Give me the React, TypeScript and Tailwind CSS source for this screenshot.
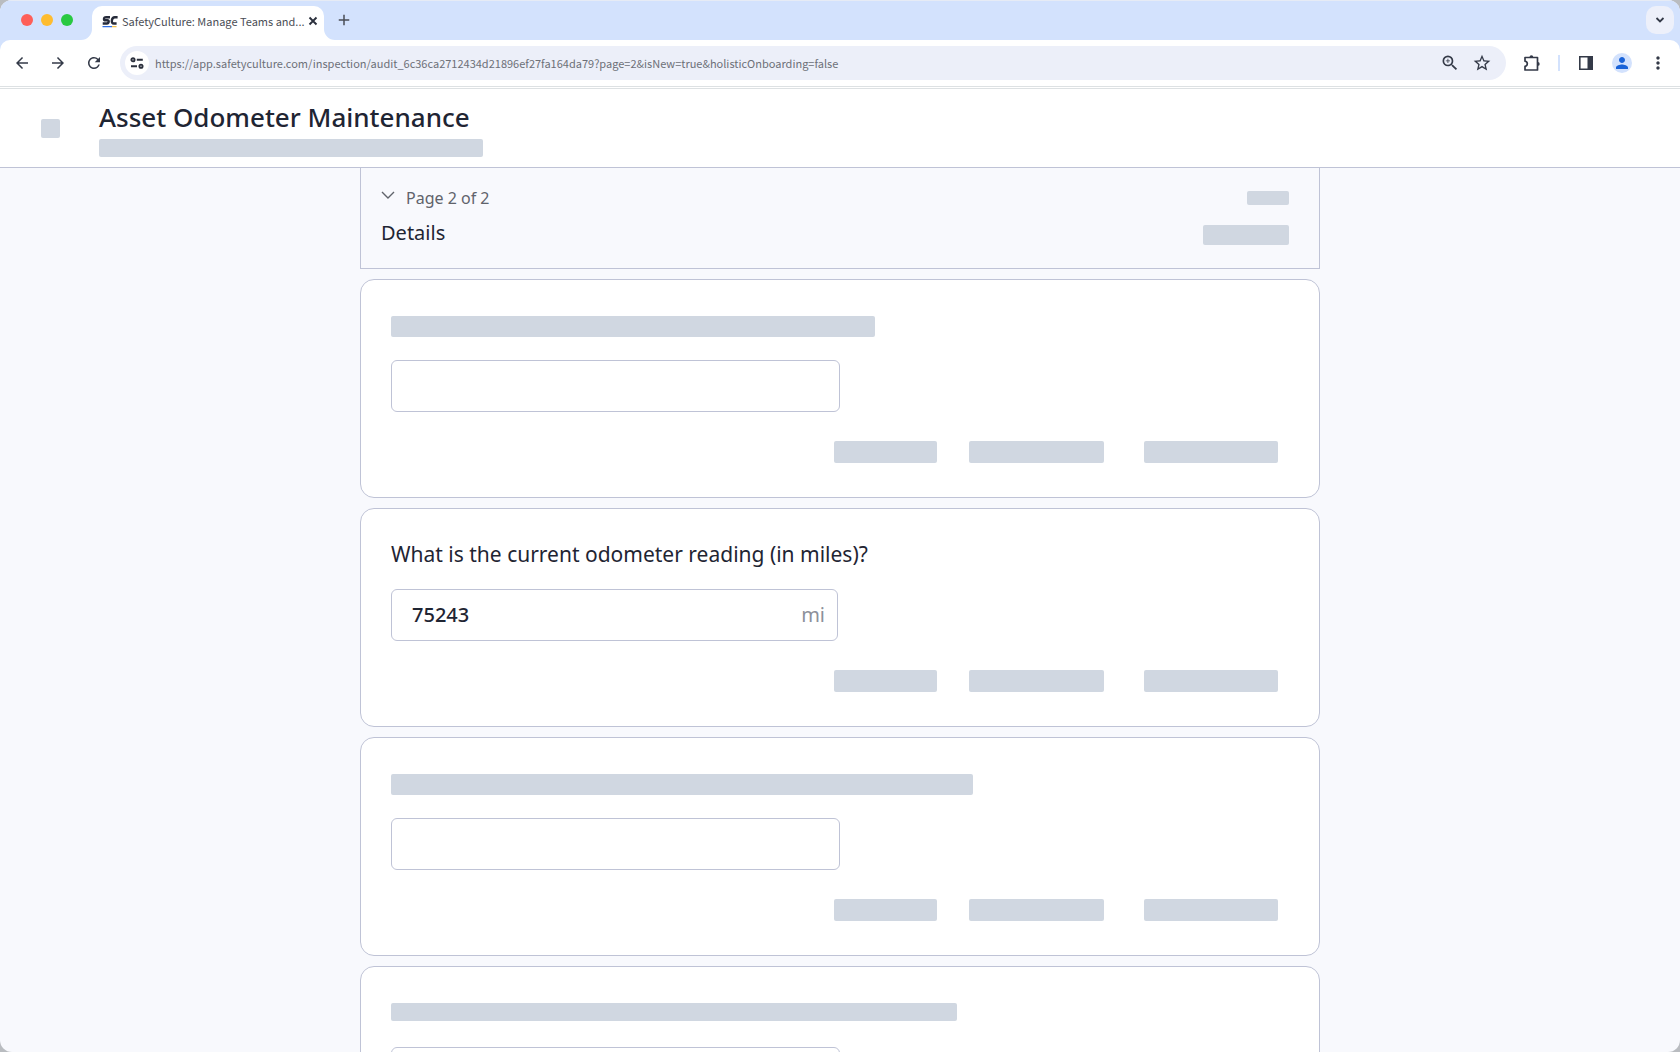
import type { ReactNode } from 'react';
import { MdArrowBack, MdArrowForward, MdMoreVert, MdPerson, MdRefresh, MdStarBorder, MdZoomIn, MdAdd } from 'react-icons/md';
import clsx from 'clsx';

const PAGE_URL =
  'https://app.safetyculture.com/inspection/audit_6c36ca2712434d21896ef27fa164da79?page=2&isNew=true&holisticOnboarding=false';

function Placeholder({ className }: { className: string }) {
  return <div aria-hidden="true" className={clsx('rounded-xs bg-[#d0d7e1]', className)} />;
}

function Logo() {
  return (
    <svg viewBox="0 0 16 13" className="h-[13px] w-4 shrink-0" fill="none">
      <g stroke="#262b3a" strokeWidth="2.4">
        <path d="M8 2.2H4.2C2.6 2.2 2 3 2 3.9s.6 1.4 1.5 1.4h1.8c1 0 1.5.6 1.4 1.4S6 8.5 4.9 8.5H.7" />
        <path d="M15.6 2.2h-2.8C11 2.2 10.2 3.3 9.900 5.2s.2 3.3 2.100 3.3h2.600" />
      </g>
      <path d="M.5 11.7h9.5" stroke="#2f6fe4" strokeWidth="1.2" />
      <path d="M10 11.7h4.5" stroke="#f3c04b" strokeWidth="1.2" />
    </svg>
  );
}

function SiteSettingsIcon() {
  return (
    <svg viewBox="0 0 14 12" className="h-3 w-3.5" fill="none" stroke="#2b303d" strokeWidth="1.9">
      <circle cx="3" cy="2.8" r="1.6" />
      <path d="M6.800 2.800h6M1 9.200h6" />
      <circle cx="11" cy="9.2" r="1.6" />
    </svg>
  );
}

function ExtensionsIcon() {
  return (
    <svg viewBox="0 0 18 18" className="size-[18px]" fill="none" stroke="#343a48" strokeWidth="1.7" strokeLinejoin="round">
      <path d="M2 3.500h12.500v12.500H2v-3.600c1.500-.3 2.300-1.200 2.300-2.600S3.500 7.500 2 7.200z" />
      <path d="M6.500 3.200a1.900 1.900 0 0 1 3.800 0zM14.800 8a1.900 1.900 0 0 1 0 3.800z" fill="#343a48" stroke="none" />
    </svg>
  );
}

function SidePanelIcon() {
  return (
    <svg viewBox="0 0 16 16" className="size-4" fill="none">
      <path d="M1.800 1.800h12.400v12.400H1.800z" stroke="#343a48" strokeWidth="1.6" />
      <path d="M9.500 1.500h5v13h-5z" fill="#343a48" />
    </svg>
  );
}

function IconButton({ label, className, children }: { label: string; className?: string; children: ReactNode }) {
  return (
    <button type="button" aria-label={label} className={clsx('flex shrink-0 items-center justify-center text-[#343a48]', className)}>
      {children}
    </button>
  );
}

function TabStrip() {
  return (
    <div className="flex h-10 items-end border-t border-[#e6ebf5] bg-[#d3e2fd] pr-1.5">
      <div className="flex h-10 items-center gap-2 pl-[21px]">
        <span className="size-3 rounded-full bg-[#fe5f58]" />
        <span className="size-3 rounded-full bg-[#febc2f]" />
        <span className="size-3 rounded-full bg-[#29c941]" />
      </div>
      {/* Active tab with its flared feet */}
      <div className="flex items-end pl-2">
        <svg viewBox="0 0 11 11" className="size-[11px]" fill="#fff">
          <path d="M11 0v11H0A11 11 0 0 0 11 0z" />
        </svg>
        <div className="flex h-[34px] w-[232px] items-center rounded-t-[10px] bg-white pr-2 pb-1 pl-2.5">
          <Logo />
          <span className="ml-1 grow text-[11px] whitespace-nowrap text-[#4a4d55]">SafetyCulture: Manage Teams and...</span>
          <IconButton label="Close tab" className="w-4">
            <svg viewBox="0 0 10 10" className="size-2.5" fill="none" stroke="#2b303d" strokeWidth="1.9">
              <path d="M1.500 1.500l7 7M8.500 1.500l-7 7" />
            </svg>
          </IconButton>
        </div>
        <svg viewBox="0 0 11 11" className="size-[11px]" fill="#fff">
          <path d="M0 0v11h11A11 11 0 0 1 0 0z" />
        </svg>
      </div>
      <IconButton label="New tab" className="h-10 w-[18px]">
        <MdAdd className="size-[18px] text-[#4a4d55]" />
      </IconButton>
      <IconButton label="Search tabs" className="mb-1.5 ml-auto size-7 rounded-[10px] bg-[#edf0fa]">
        <svg viewBox="0 0 10 6" className="h-1.5 w-2.5" fill="none" stroke="currentColor" strokeWidth="1.8">
          <path d="M1.500 1l3.500 3.500L8.500 1" />
        </svg>
      </IconButton>
    </div>
  );
}

function Toolbar() {
  return (
    <div className="bg-[#d3e2fd]">
      <div className="flex h-[46px] items-center rounded-t-[10px] bg-white px-3">
        <div className="flex gap-4">
          <IconButton label="Back" className="size-5">
            <MdArrowBack className="size-[18px]" />
          </IconButton>
          <IconButton label="Forward" className="size-5">
            <MdArrowForward className="size-[18px]" />
          </IconButton>
          <IconButton label="Reload" className="size-5">
            <MdRefresh className="size-[18px]" />
          </IconButton>
        </div>
        <div className="ml-4 flex h-[34px] grow items-center rounded-full bg-[#eceff9] pr-3.5 pl-[5px]">
          <IconButton label="Site information" className="size-6 rounded-full bg-white">
            <SiteSettingsIcon />
          </IconButton>
          <input
            aria-label="Address"
            defaultValue={PAGE_URL}
            className="ml-1.5 min-w-0 grow bg-transparent text-[11px] text-[#6d7078] outline-none"
          />
          <IconButton label="Zoom" className="size-5">
            <MdZoomIn className="size-5" />
          </IconButton>
          <IconButton label="Bookmark" className="ml-3 size-5">
            <MdStarBorder className="size-5" />
          </IconButton>
        </div>
        <IconButton label="Extensions" className="ml-4 size-5">
          <ExtensionsIcon />
        </IconButton>
        <span className="ml-4 h-4 w-0.5 bg-[#d3e2fd]" />
        <IconButton label="Side panel" className="ml-4 size-5">
          <SidePanelIcon />
        </IconButton>
        <IconButton label="Profile" className="ml-4 size-5 rounded-full bg-[#d3e2fd]">
          <MdPerson className="size-[18px] text-[#1a63d8]" />
        </IconButton>
        <IconButton label="Menu" className="ml-4 size-5">
          <MdMoreVert className="size-5" />
        </IconButton>
      </div>
      <div className="h-[3px] border-y border-[#dde1e3] bg-white" />
    </div>
  );
}

type CardProps = {
  id: string;
  question?: string;
  bar?: string;
  value?: string;
  unit?: string;
};

const cards: CardProps[] = [
  { id: 'q1', bar: 'h-[21px] w-[484px]' },
  { id: 'q2', question: 'What is the current odometer reading (in miles)?', value: '75243', unit: 'mi' },
  { id: 'q3', bar: 'h-[21px] w-[582px]' },
  { id: 'q4', bar: 'h-[18px] w-[566px]' },
];

function QuestionCard({ id, question, bar, value, unit }: CardProps) {
  return (
    <section className="rounded-[14px] border border-[#bfc3d6] bg-white pt-8 pr-[41px] pb-[34px] pl-[30px]">
      <div className="flex h-12 items-start">
        {question ? (
          <label htmlFor={id} className="text-[21px] leading-[26px]">
            {question}
          </label>
        ) : (
          <Placeholder className={clsx('mt-1', bar)} />
        )}
      </div>
      <div
        className={clsx(
          'flex h-[52px] items-center rounded-md border border-[#bfc3d6] pr-3 pl-5 text-xl',
          unit ? 'w-[447px]' : 'w-[449px]',
        )}
      >
        <input
          id={id}
          aria-label={question ? undefined : 'Answer'}
          defaultValue={value}
          className="min-w-0 grow bg-transparent font-medium outline-none"
        />
        {unit && <span className="text-[#8d909a]">{unit}</span>}
      </div>
      <div className="mt-[29px] flex justify-end">
        <Placeholder className="h-[22px] w-[103px]" />
        <Placeholder className="ml-8 h-[22px] w-[135px]" />
        <Placeholder className="ml-10 h-[22px] w-[134px]" />
      </div>
    </section>
  );
}

export default function App() {
  return (
    <div className="h-screen bg-[#b9bcc0] font-['Noto_Sans',sans-serif] text-[#1f2533]">
      <div className="flex h-full flex-col overflow-hidden rounded-xl bg-[#f8f9fd]">
        <div className="shrink-0 font-['Noto_Sans_CJK_SC',sans-serif]">
          <TabStrip />
          <Toolbar />
        </div>

        {/* Inspection header */}
        <header className="flex h-[79px] shrink-0 items-center border-b border-[#bfc3d6] bg-white pl-[41px]">
          <Placeholder className="size-[19px]" />
          <div className="ml-[39px]">
            <h1 className="text-[26px] leading-9 font-medium">Asset Odometer Maintenance</h1>
            <Placeholder className="mt-1 h-[18px] w-96" />
          </div>
        </header>

        <main className="mx-auto w-full max-w-[960px] grow">
          <div className="flex h-[101px] justify-between border border-t-0 border-[#bfc3d6] pr-[30px] pl-5">
            <div className="pt-[18px]">
              <button type="button" className="flex items-center gap-[11px] leading-6 text-[#60636b]">
                <svg viewBox="0 0 14 8" className="mb-1.5 h-2 w-3.5" fill="none" stroke="currentColor" strokeWidth="1.4">
                  <path d="M1 1l6 6 6-6" />
                </svg>
                Page 2 of 2
              </button>
              <h2 className="mt-2 text-xl leading-[30px]">Details</h2>
            </div>
            <div className="flex flex-col items-end gap-5 pt-[23px]">
              <Placeholder className="h-3.5 w-[42px]" />
              <Placeholder className="h-5 w-[86px]" />
            </div>
          </div>

          <div className="mt-2.5 space-y-2.5">
            {cards.map(card => (
              <QuestionCard key={card.id} {...card} />
            ))}
          </div>
        </main>
      </div>
    </div>
  );
}
